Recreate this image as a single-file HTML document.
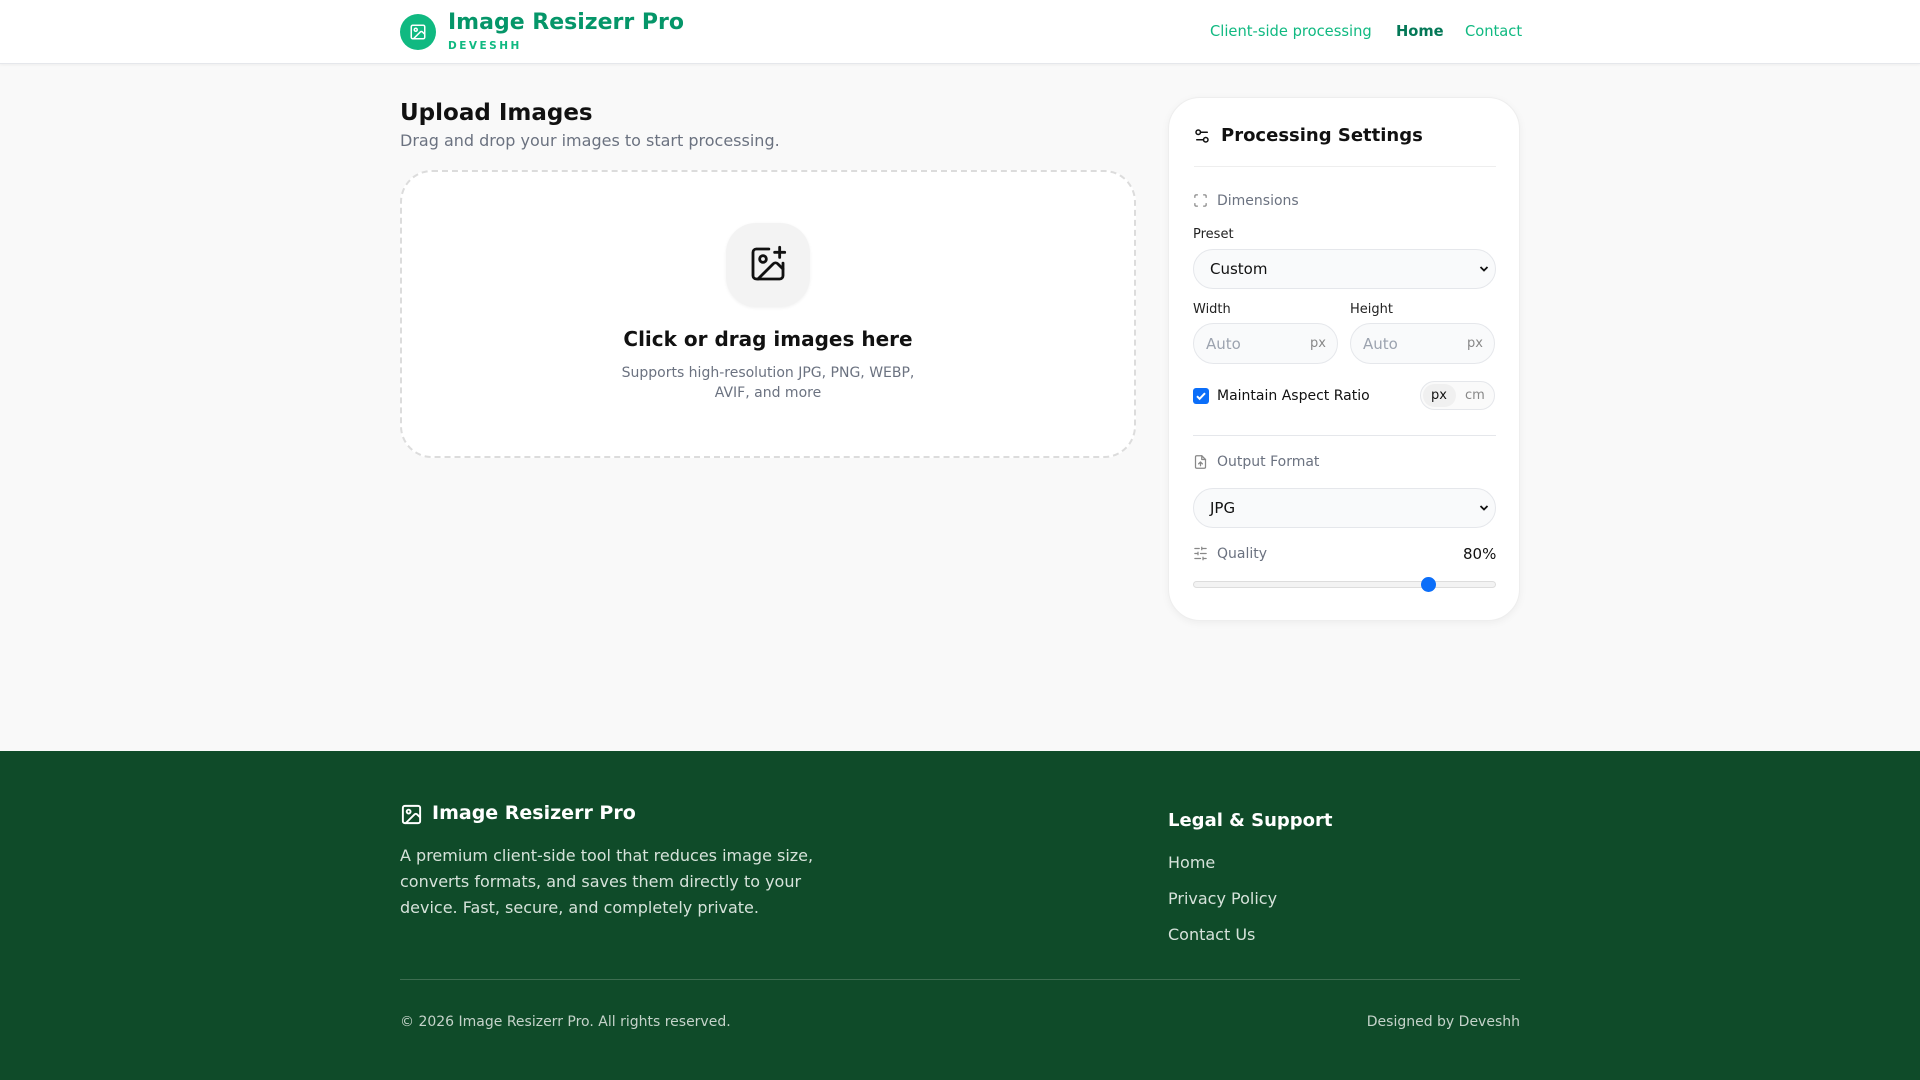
<!DOCTYPE html>
<html><head><meta charset="utf-8"><style>
*{box-sizing:border-box;margin:0;padding:0}
body{width:1920px;height:1080px;overflow:hidden;background:#f9f9f9;font-family:"DejaVu Sans","Liberation Sans",sans-serif;color:#111;position:relative}
.abs{position:absolute}
header{position:absolute;left:0;top:0;width:1920px;height:64px;background:#fff;border-bottom:1px solid #e5e7eb;box-shadow:0 1px 3px rgba(0,0,0,.05)}
.nav a{position:absolute;top:23px;font-size:14.7px;color:#10b981;text-decoration:none}
.lbl{font-size:13px;color:#222}
.sec{font-size:14px;color:#6b7280}
.field{position:absolute;background:#f9fafb;border:1px solid #e5e7eb;border-radius:22px}
footer{position:absolute;left:0;top:751px;width:1920px;height:329px;background:#0f4b29;color:#fff}
.fl{position:absolute;left:1168px;font-size:16px;color:#d6e2da}
</style></head><body>
<header>
<div class="abs" style="left:400px;top:14px;width:36px;height:36px;border-radius:50%;background:#10b981"></div>
<svg class="abs" style="left:409px;top:23px" width="18" height="18" viewBox="0 0 24 24" fill="none" stroke="#fff" stroke-width="2" stroke-linecap="round" stroke-linejoin="round"><rect x="3" y="3" width="18" height="18" rx="2"/><circle cx="9" cy="9" r="2"/><path d="M21 15l-3.1-3.1a2 2 0 0 0-2.8 0L6 21"/></svg>
<div class="abs" style="left:448px;top:10px;font-size:22px;font-weight:bold;color:#059669">Image Resizerr Pro</div>
<div class="abs" style="left:448px;top:40px;font-size:10.5px;font-weight:bold;letter-spacing:2.5px;color:#10b981">DEVESHH</div>
<div class="nav"><a style="left:1210px">Client-side processing</a><a style="left:1396px;font-weight:bold;color:#047857">Home</a><a style="left:1465px">Contact</a></div>
</header>

<div class="abs" style="left:400px;top:100px;font-size:23px;font-weight:bold">Upload Images</div>
<div class="abs" style="left:400px;top:131px;font-size:16px;color:#6b7280">Drag and drop your images to start processing.</div>

<div class="abs" style="left:400px;top:170px;width:736px;height:288px;border:2px dashed #dcdcdc;border-radius:32px;background:#fff"></div>
<div class="abs" style="left:726px;top:223px;width:84px;height:84px;border-radius:30px;background:#f3f3f3;box-shadow:0 1px 3px rgba(0,0,0,.06)"></div>
<svg class="abs" style="left:748px;top:244px" width="40" height="40" viewBox="0 0 24 24" fill="none" stroke="#111" stroke-width="1.7" stroke-linecap="round" stroke-linejoin="round"><path d="M16 5h6M19 2v6"/><path d="M21 11.5V19a2 2 0 0 1-2 2H5a2 2 0 0 1-2-2V5a2 2 0 0 1 2-2h7.5"/><path d="M21 15l-3.1-3.1a2 2 0 0 0-2.8 0L6 21"/><circle cx="9" cy="9" r="2"/></svg>
<div class="abs" style="left:400px;width:736px;top:327px;text-align:center;font-size:20px;font-weight:bold">Click or drag images here</div>
<div class="abs" style="left:613px;width:310px;top:363px;text-align:center;font-size:14px;line-height:20px;color:#6b7280">Supports high-resolution JPG, PNG, WEBP, AVIF, and more</div>

<div class="abs" style="left:1168px;top:97px;width:352px;height:524px;background:#fff;border:1px solid #eee;border-radius:32px;box-shadow:0 2px 8px rgba(0,0,0,.05)"></div>
<svg class="abs" style="left:1193px;top:127px" width="18" height="18" viewBox="0 0 24 24" fill="none" stroke="#111" stroke-width="2" stroke-linecap="round"><path d="M14 17H5M19 7h-9"/><circle cx="17" cy="17" r="3"/><circle cx="7" cy="7" r="3"/></svg>
<div class="abs" style="left:1221px;top:125px;font-size:18px;font-weight:bold">Processing Settings</div>
<div class="abs" style="left:1194px;top:166px;width:302px;height:1px;background:#eee"></div>

<svg class="abs" style="left:1193px;top:193px" width="15" height="15" viewBox="0 0 24 24" fill="none" stroke="#888" stroke-width="2" stroke-linecap="round"><path d="M3 7V5a2 2 0 0 1 2-2h2M17 3h2a2 2 0 0 1 2 2v2M21 17v2a2 2 0 0 1-2 2h-2M7 21H5a2 2 0 0 1-2-2v-2"/></svg>
<div class="abs sec" style="left:1217px;top:193px">Dimensions</div>
<div class="abs lbl" style="left:1193px;top:227px">Preset</div>
<div class="field" style="left:1193px;top:249px;width:303px;height:40px"></div>
<div class="abs" style="left:1210px;top:260px;font-size:15px">Custom</div>
<svg class="abs" style="left:1479px;top:264px" width="10" height="10" viewBox="0 0 10 10"><path d="M1.5 3l3.5 3.5L8.5 3" fill="none" stroke="#111" stroke-width="1.8"/></svg>
<div class="abs lbl" style="left:1193px;top:302px">Width</div>
<div class="abs lbl" style="left:1350px;top:302px">Height</div>
<div class="field" style="left:1193px;top:323px;width:145px;height:41px"></div>
<div class="field" style="left:1350px;top:323px;width:145px;height:41px"></div>
<div class="abs" style="left:1206px;top:335px;font-size:15px;color:#9ca3af">Auto</div>
<div class="abs" style="left:1310px;top:336px;font-size:13px;color:#888">px</div>
<div class="abs" style="left:1363px;top:335px;font-size:15px;color:#9ca3af">Auto</div>
<div class="abs" style="left:1467px;top:336px;font-size:13px;color:#888">px</div>
<div class="abs" style="left:1193px;top:388px;width:16px;height:16px;border-radius:3px;background:#0b6ef9"></div>
<svg class="abs" style="left:1194px;top:389px" width="14" height="14" viewBox="0 0 14 14"><path d="M3 7.2l2.6 2.6L11 4.2" fill="none" stroke="#fff" stroke-width="2"/></svg>
<div class="abs" style="left:1217px;top:388px;font-size:14px">Maintain Aspect Ratio</div>
<div class="abs" style="left:1420px;top:381px;width:75px;height:29px;border:1px solid #e5e7eb;border-radius:15px;background:#fafafa"></div>
<div class="abs" style="left:1423px;top:384px;width:33px;height:23px;border-radius:12px;background:#f0f0f0"></div>
<div class="abs" style="left:1431px;top:388px;font-size:13px">px</div>
<div class="abs" style="left:1465px;top:388px;font-size:13px;color:#888">cm</div>
<div class="abs" style="left:1193px;top:435px;width:303px;height:1px;background:#e5e7eb"></div>

<svg class="abs" style="left:1193px;top:454px" width="15" height="16" viewBox="0 0 24 24" fill="none" stroke="#888" stroke-width="2" stroke-linecap="round" stroke-linejoin="round"><path d="M14 2H6a2 2 0 0 0-2 2v16a2 2 0 0 0 2 2h12a2 2 0 0 0 2-2V8z"/><path d="M14 2v6h6M12 18v-6M9 15l3-3 3 3"/></svg>
<div class="abs sec" style="left:1217px;top:454px">Output Format</div>
<div class="field" style="left:1193px;top:488px;width:303px;height:40px"></div>
<div class="abs" style="left:1210px;top:499px;font-size:15px">JPG</div>
<svg class="abs" style="left:1479px;top:503px" width="10" height="10" viewBox="0 0 10 10"><path d="M1.5 3l3.5 3.5L8.5 3" fill="none" stroke="#111" stroke-width="1.8"/></svg>
<svg class="abs" style="left:1193px;top:546px" width="15" height="15" viewBox="0 0 24 24" fill="none" stroke="#888" stroke-width="2" stroke-linecap="round"><path d="M21 4h-7M10 4H3M21 12h-9M8 12H3M21 20h-5M12 20H3M14 2v4M8 10v4M16 18v4"/></svg>
<div class="abs sec" style="left:1217px;top:546px">Quality</div>
<div class="abs" style="left:1463px;top:545px;font-size:15px">80%</div>
<div class="abs" style="left:1193px;top:581px;width:303px;height:7px;border:1px solid #ddd;border-radius:4px;background:#f3f3f3"></div>
<div class="abs" style="left:1421px;top:577px;width:15px;height:15px;border-radius:50%;background:#0b6ef9"></div>

<footer>
<svg class="abs" style="left:400px;top:52px" width="23" height="23" viewBox="0 0 24 24" fill="none" stroke="#fff" stroke-width="2" stroke-linecap="round" stroke-linejoin="round"><rect x="3" y="3" width="18" height="18" rx="2"/><circle cx="9" cy="9" r="2"/><path d="M21 15l-3.1-3.1a2 2 0 0 0-2.8 0L6 21"/></svg>
<div class="abs" style="left:432px;top:51px;font-size:19px;font-weight:bold">Image Resizerr Pro</div>
<div class="abs" style="left:400px;top:92px;width:430px;font-size:16px;line-height:26px;color:#d6e2da">A premium client-side tool that reduces image size, converts formats, and saves them directly to your device. Fast, secure, and completely private.</div>
<div class="abs" style="left:1168px;top:59px;font-size:18px;font-weight:bold">Legal &amp; Support</div>
<div class="fl" style="top:102px">Home</div>
<div class="fl" style="top:138px">Privacy Policy</div>
<div class="fl" style="top:174px">Contact Us</div>
<div class="abs" style="left:400px;top:228px;width:1120px;height:1px;background:#3d6d50"></div>
<div class="abs" style="left:400px;top:263px;font-size:14px;color:#c5d3ca">© 2026 Image Resizerr Pro. All rights reserved.</div>
<div class="abs" style="right:400px;top:263px;font-size:14px;color:#c5d3ca">Designed by Deveshh</div>
</footer>
</body></html>
